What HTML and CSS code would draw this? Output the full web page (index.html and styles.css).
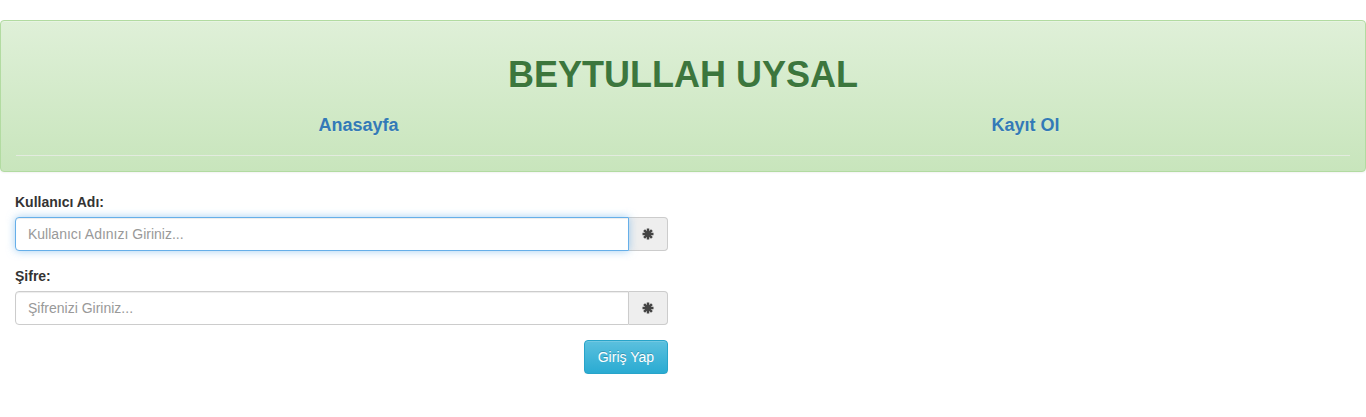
FILE: index.html
```html
<!DOCTYPE html>
<html lang="tr">
<head>
<meta charset="utf-8">
<title>Beytullah Uysal</title>
<link rel="stylesheet" href="styles.css">
</head>
<body>
<div class="page">
  <header class="banner">
    <h1 class="banner-title">BEYTULLAH UYSAL</h1>
    <nav class="banner-nav">
      <a class="banner-link" href="#">Anasayfa</a>
      <a class="banner-link" href="#">Kayıt Ol</a>
    </nav>
    <hr class="banner-rule">
  </header>

  <form class="login">
    <div class="form-group">
      <label class="form-label" for="user">Kullanıcı Adı:</label>
      <div class="input-group">
        <input class="form-control is-focused" id="user" type="text" placeholder="Kullanıcı Adınızı Giriniz..." autofocus>
        <span class="addon">
          <svg class="asterisk" viewBox="0 0 12 12" aria-hidden="true">
            <g stroke="currentColor" stroke-width="2.5" stroke-linecap="butt">
              <line x1="6" y1="0.5" x2="6" y2="11.5"/>
              <line x1="0.5" y1="6" x2="11.5" y2="6"/>
              <line x1="2.1" y1="2.1" x2="9.9" y2="9.9"/>
              <line x1="9.9" y1="2.1" x2="2.1" y2="9.9"/>
            </g>
          </svg>
        </span>
      </div>
    </div>
    <div class="form-group">
      <label class="form-label" for="pass">Şifre:</label>
      <div class="input-group">
        <input class="form-control" id="pass" type="password" placeholder="Şifrenizi Giriniz...">
        <span class="addon">
          <svg class="asterisk" viewBox="0 0 12 12" aria-hidden="true">
            <g stroke="currentColor" stroke-width="2.5" stroke-linecap="butt">
              <line x1="6" y1="0.5" x2="6" y2="11.5"/>
              <line x1="0.5" y1="6" x2="11.5" y2="6"/>
              <line x1="2.1" y1="2.1" x2="9.9" y2="9.9"/>
              <line x1="9.9" y1="2.1" x2="2.1" y2="9.9"/>
            </g>
          </svg>
        </span>
      </div>
    </div>
    <div class="form-actions">
      <button class="btn-info" type="submit">Giriş Yap</button>
    </div>
  </form>
</div>
</body>
</html>
```

FILE: styles.css
```css
* { box-sizing: border-box; }

html, body {
  margin: 0;
  padding: 0;
  background: #fff;
}

body {
  font-family: "Liberation Sans", Arial, Helvetica, sans-serif;
  font-size: 14px;
  line-height: 20px;
  color: #333;
}

.page {
  padding-top: 20px;
}

.banner {
  border: 1px solid #b2dba1;
  border-radius: 4px;
  padding: 15px;
  background-color: #dff0d8;
  background-image: linear-gradient(to bottom, #dff0d8 0%, #c8e5bc 100%);
  box-shadow: inset 0 1px 0 rgba(255,255,255,.25), 0 1px 2px rgba(0,0,0,.05);
  text-shadow: 0 1px 0 rgba(255,255,255,.2);
}

.banner-title {
  margin: 19px 0 0;
  font-size: 36px;
  line-height: 40px;
  font-weight: bold;
  color: #3c763d;
  text-align: center;
}

.banner-nav {
  display: grid;
  grid-template-columns: 685px 1fr;
  margin-top: 20px;
}

.banner-link {
  justify-self: center;
  font-size: 18px;
  line-height: 20px;
  font-weight: bold;
  color: #337ab7;
  text-decoration: none;
}

.banner-rule {
  margin: 20px 0 0;
  border: 0;
  border-top: 1px solid #e3ebdf;
  height: 0;
}

.login {
  width: 683px;
  padding: 20px 15px 0;
}

.form-group {
  margin-bottom: 15px;
}

.form-label {
  display: inline-block;
  margin-bottom: 5px;
  font-weight: bold;
  color: #333;
}

.input-group {
  display: flex;
}

.form-control {
  flex: 1;
  min-width: 0;
  height: 34px;
  padding: 6px 12px;
  font-family: inherit;
  font-size: 14px;
  line-height: 20px;
  color: #555;
  background: #fff;
  border: 1px solid #ccc;
  border-radius: 4px 0 0 4px;
  box-shadow: inset 0 1px 1px rgba(0,0,0,.075);
  outline: none;
}

.form-control::placeholder {
  color: #999;
  opacity: 1;
}

.form-control.is-focused,
.form-control:focus {
  border-color: #66afe9;
  box-shadow: inset 0 1px 1px rgba(0,0,0,.075), 0 0 8px rgba(102,175,233,.6);
  position: relative;
  z-index: 1;
}

.addon {
  display: flex;
  align-items: center;
  justify-content: center;
  width: 39px;
  height: 34px;
  background: #eee;
  border: 1px solid #ccc;
  border-left: 0;
  border-radius: 0 4px 4px 0;
  color: #444;
}

.asterisk {
  width: 12px;
  height: 12px;
  display: block;
}

.form-actions {
  display: flex;
  justify-content: flex-end;
}

.btn-info {
  height: 34px;
  padding: 6px 13px;
  font-family: inherit;
  font-size: 14px;
  line-height: 20px;
  color: #fff;
  background-color: #5bc0de;
  background-image: linear-gradient(to bottom, #5bc0de 0%, #2aabd2 100%);
  border: 1px solid #28a4c9;
  border-radius: 4px;
  text-shadow: 0 -1px 0 rgba(0,0,0,.2);
  box-shadow: inset 0 1px 0 rgba(255,255,255,.15), 0 1px 1px rgba(0,0,0,.075);
  cursor: pointer;
}
```
